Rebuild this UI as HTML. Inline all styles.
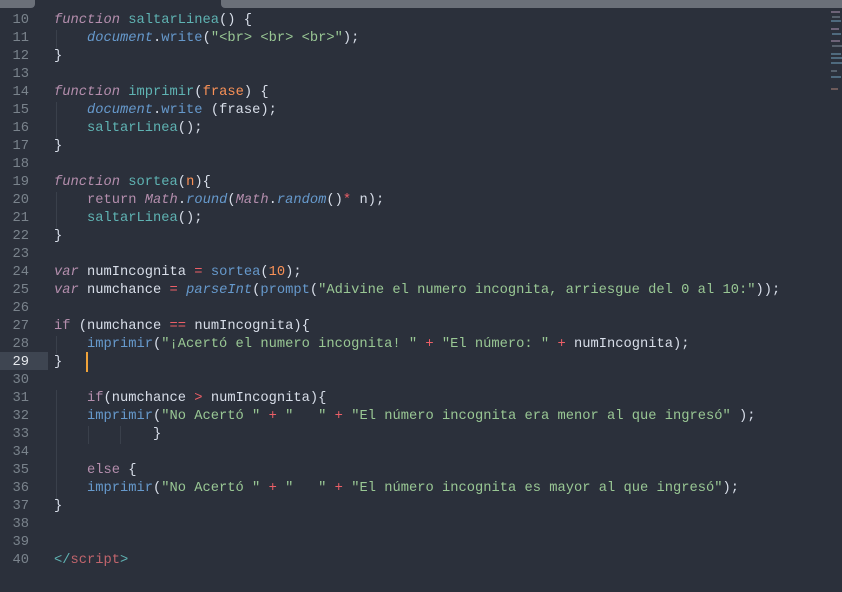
<!DOCTYPE html>
<html><head><meta charset="utf-8"><style>
html,body{margin:0;padding:0;}
body{width:842px;height:590px;background:#2b303b;overflow:hidden;position:relative;font-family:"Liberation Mono",monospace;font-size:13.75px;}
.wrap{position:absolute;left:0;top:2px;width:842px;height:590px;}
.tab1{position:absolute;left:0;top:0;width:35px;height:8px;background:#6b7079;border-radius:0 0 4px 0;}
.tab2{position:absolute;left:221px;top:0;width:621px;height:8px;background:#6b7079;border-radius:0 0 0 4px;}
.ln{position:absolute;left:0;width:29px;text-align:right;color:#7a838c;height:18px;line-height:18px;}
.hl{position:absolute;left:0;top:350px;width:48px;height:18px;background:#3e4551;}
.cl{position:absolute;left:54px;height:18px;line-height:18px;white-space:pre;color:#d8dee9;}
.k{color:#b48ead;font-style:italic}
.kw{color:#b48ead}
.f{color:#5fb3b3}
.b{color:#6699cc;font-style:italic}
.m{color:#6699cc}
.s{color:#99c794}
.p{color:#f99157}
.o{color:#ec5f67}
.g{position:absolute;width:1px;background:#3a404b;}
.caret{position:absolute;left:86px;top:350px;width:2px;height:20px;background:#f0a33a;}
.mm{position:absolute;background:#56606c;height:2px;}
</style></head><body>
<div class="tab1"></div><div class="tab2"></div>
<div class="wrap">
<div class="hl"></div>
<div class="g" style="left:56px;top:28px;height:18px"></div>
<div class="g" style="left:56px;top:100px;height:36px"></div>
<div class="g" style="left:56px;top:190px;height:36px"></div>
<div class="g" style="left:56px;top:334px;height:18px"></div>
<div class="g" style="left:56px;top:388px;height:110px"></div>
<div class="g" style="left:88px;top:424px;height:18px"></div>
<div class="g" style="left:120px;top:424px;height:18px"></div>
<div class="caret"></div>

<div class="ln" style="top:10px">10</div><div class="cl" style="top:10px"><span class="k">function</span> <span class="f">saltarLinea</span>() {</div>
<div class="ln" style="top:28px">11</div><div class="cl" style="top:28px">    <span class="b">document</span>.<span class="m">write</span>(<span class="s">"&lt;br&gt; &lt;br&gt; &lt;br&gt;"</span>);</div>
<div class="ln" style="top:46px">12</div><div class="cl" style="top:46px">}</div>
<div class="ln" style="top:64px">13</div>
<div class="ln" style="top:82px">14</div><div class="cl" style="top:82px"><span class="k">function</span> <span class="f">imprimir</span>(<span class="p">frase</span>) {</div>
<div class="ln" style="top:100px">15</div><div class="cl" style="top:100px">    <span class="b">document</span>.<span class="m">write</span> (frase);</div>
<div class="ln" style="top:118px">16</div><div class="cl" style="top:118px">    <span class="f">saltarLinea</span>();</div>
<div class="ln" style="top:136px">17</div><div class="cl" style="top:136px">}</div>
<div class="ln" style="top:154px">18</div>
<div class="ln" style="top:172px">19</div><div class="cl" style="top:172px"><span class="k">function</span> <span class="f">sortea</span>(<span class="p">n</span>){</div>
<div class="ln" style="top:190px">20</div><div class="cl" style="top:190px">    <span class="kw">return</span> <span class="k">Math</span>.<span class="b">round</span>(<span class="k">Math</span>.<span class="b">random</span>()<span class="o">*</span> n);</div>
<div class="ln" style="top:208px">21</div><div class="cl" style="top:208px">    <span class="f">saltarLinea</span>();</div>
<div class="ln" style="top:226px">22</div><div class="cl" style="top:226px">}</div>
<div class="ln" style="top:244px">23</div>
<div class="ln" style="top:262px">24</div><div class="cl" style="top:262px"><span class="k">var</span> numIncognita <span class="o">=</span> <span class="m">sortea</span>(<span class="p">10</span>);</div>
<div class="ln" style="top:280px">25</div><div class="cl" style="top:280px"><span class="k">var</span> numchance <span class="o">=</span> <span class="b">parseInt</span>(<span class="m">prompt</span>(<span class="s">"Adivine el numero incognita, arriesgue del 0 al 10:"</span>));</div>
<div class="ln" style="top:298px">26</div>
<div class="ln" style="top:316px">27</div><div class="cl" style="top:316px"><span class="kw">if</span> (numchance <span class="o">==</span> numIncognita){</div>
<div class="ln" style="top:334px">28</div><div class="cl" style="top:334px">    <span class="m">imprimir</span>(<span class="s">"¡Acertó el numero incognita! "</span> <span class="o">+</span> <span class="s">"El número: "</span> <span class="o">+</span> numIncognita);</div>
<div class="ln" style="top:352px;color:#e6e9ed">29</div><div class="cl" style="top:352px">}</div>
<div class="ln" style="top:370px">30</div>
<div class="ln" style="top:388px">31</div><div class="cl" style="top:388px">    <span class="kw">if</span>(numchance <span class="o">&gt;</span> numIncognita){</div>
<div class="ln" style="top:406px">32</div><div class="cl" style="top:406px">    <span class="m">imprimir</span>(<span class="s">"No Acertó "</span> <span class="o">+</span> <span class="s">"   "</span> <span class="o">+</span> <span class="s">"El número incognita era menor al que ingresó"</span> );</div>
<div class="ln" style="top:424px">33</div><div class="cl" style="top:424px">            }</div>
<div class="ln" style="top:442px">34</div>
<div class="ln" style="top:460px">35</div><div class="cl" style="top:460px">    <span class="kw">else</span> {</div>
<div class="ln" style="top:478px">36</div><div class="cl" style="top:478px">    <span class="m">imprimir</span>(<span class="s">"No Acertó "</span> <span class="o">+</span> <span class="s">"   "</span> <span class="o">+</span> <span class="s">"El número incognita es mayor al que ingresó"</span>);</div>
<div class="ln" style="top:496px">37</div><div class="cl" style="top:496px">}</div>
<div class="ln" style="top:514px">38</div>
<div class="ln" style="top:532px">39</div>
<div class="ln" style="top:550px">40</div><div class="cl" style="top:550px"><span class="f">&lt;/</span><span class="o" style="color:#c0646c">script</span><span class="f">&gt;</span></div>

<div class="mm" style="left:831px;top:9px;width:9px;background:#6d6378"></div>
<div class="mm" style="left:832px;top:14px;width:8px"></div>
<div class="mm" style="left:831px;top:18px;width:10px;background:#4f6a7e"></div>
<div class="mm" style="left:831px;top:26px;width:8px;background:#6d6378"></div>
<div class="mm" style="left:832px;top:31px;width:9px;background:#4f6a7e"></div>
<div class="mm" style="left:831px;top:38px;width:9px;background:#6d6378"></div>
<div class="mm" style="left:832px;top:43px;width:10px"></div>
<div class="mm" style="left:831px;top:51px;width:10px;background:#4f6a7e"></div>
<div class="mm" style="left:831px;top:55px;width:11px;background:#4f6a7e"></div>
<div class="mm" style="left:831px;top:60px;width:11px;background:#4f6a7e"></div>
<div class="mm" style="left:831px;top:68px;width:6px"></div>
<div class="mm" style="left:831px;top:74px;width:10px;background:#4f6a7e"></div>
<div class="mm" style="left:831px;top:86px;width:7px;background:#6d5a5a"></div>
</div>
</body></html>
